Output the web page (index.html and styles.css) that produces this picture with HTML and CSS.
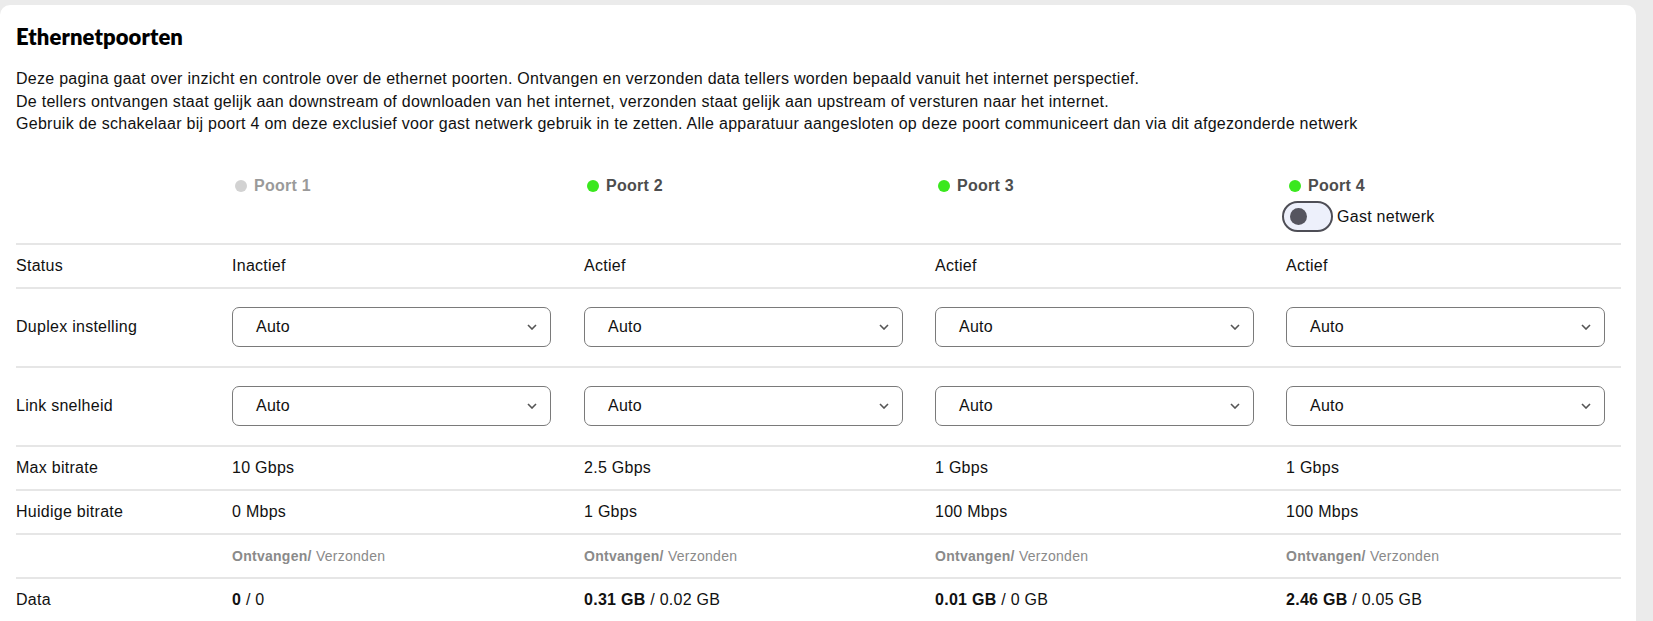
FILE: index.html
```html
<!DOCTYPE html>
<html lang="nl">
<head>
<meta charset="utf-8">
<title>Ethernetpoorten</title>
<link rel="stylesheet" href="styles.css">
</head>
<body>
<div class="card">
  <h1 class="title">Ethernetpoorten</h1>
  <p class="intro">Deze pagina gaat over inzicht en controle over de ethernet poorten. Ontvangen en verzonden data tellers worden bepaald vanuit het internet perspectief.<br>De tellers ontvangen staat gelijk aan downstream of downloaden van het internet, verzonden staat gelijk aan upstream of versturen naar het internet.<br>Gebruik de schakelaar bij poort 4 om deze exclusief voor gast netwerk gebruik in te zetten. Alle apparatuur aangesloten op deze poort communiceert dan via dit afgezonderde netwerk</p>

  <div class="ports">
    <div class="row head">
      <div class="cell"></div>
      <div class="cell"><div class="port off"><span class="dot"></span>Poort 1</div></div>
      <div class="cell"><div class="port"><span class="dot"></span>Poort 2</div></div>
      <div class="cell"><div class="port"><span class="dot"></span>Poort 3</div></div>
      <div class="cell">
        <div class="port"><span class="dot"></span>Poort 4</div>
        <label class="guest"><span class="switch"><span class="knob"></span></span>Gast netwerk</label>
      </div>
    </div>

    <div class="row text">
      <div class="cell label">Status</div>
      <div class="cell">Inactief</div>
      <div class="cell">Actief</div>
      <div class="cell">Actief</div>
      <div class="cell">Actief</div>
    </div>

    <div class="row ctrl">
      <div class="cell label">Duplex instelling</div>
      <div class="cell"><div class="select"><span>Auto</span><svg class="chev" width="10" height="6" viewBox="0 0 10 6"><path d="M1 1l4 4 4-4" fill="none" stroke="#555" stroke-width="1.6"/></svg></div></div>
      <div class="cell"><div class="select"><span>Auto</span><svg class="chev" width="10" height="6" viewBox="0 0 10 6"><path d="M1 1l4 4 4-4" fill="none" stroke="#555" stroke-width="1.6"/></svg></div></div>
      <div class="cell"><div class="select"><span>Auto</span><svg class="chev" width="10" height="6" viewBox="0 0 10 6"><path d="M1 1l4 4 4-4" fill="none" stroke="#555" stroke-width="1.6"/></svg></div></div>
      <div class="cell"><div class="select"><span>Auto</span><svg class="chev" width="10" height="6" viewBox="0 0 10 6"><path d="M1 1l4 4 4-4" fill="none" stroke="#555" stroke-width="1.6"/></svg></div></div>
    </div>

    <div class="row ctrl">
      <div class="cell label">Link snelheid</div>
      <div class="cell"><div class="select"><span>Auto</span><svg class="chev" width="10" height="6" viewBox="0 0 10 6"><path d="M1 1l4 4 4-4" fill="none" stroke="#555" stroke-width="1.6"/></svg></div></div>
      <div class="cell"><div class="select"><span>Auto</span><svg class="chev" width="10" height="6" viewBox="0 0 10 6"><path d="M1 1l4 4 4-4" fill="none" stroke="#555" stroke-width="1.6"/></svg></div></div>
      <div class="cell"><div class="select"><span>Auto</span><svg class="chev" width="10" height="6" viewBox="0 0 10 6"><path d="M1 1l4 4 4-4" fill="none" stroke="#555" stroke-width="1.6"/></svg></div></div>
      <div class="cell"><div class="select"><span>Auto</span><svg class="chev" width="10" height="6" viewBox="0 0 10 6"><path d="M1 1l4 4 4-4" fill="none" stroke="#555" stroke-width="1.6"/></svg></div></div>
    </div>

    <div class="row text">
      <div class="cell label">Max bitrate</div>
      <div class="cell">10 Gbps</div>
      <div class="cell">2.5 Gbps</div>
      <div class="cell">1 Gbps</div>
      <div class="cell">1 Gbps</div>
    </div>

    <div class="row text">
      <div class="cell label">Huidige bitrate</div>
      <div class="cell">0 Mbps</div>
      <div class="cell">1 Gbps</div>
      <div class="cell">100 Mbps</div>
      <div class="cell">100 Mbps</div>
    </div>

    <div class="row text small">
      <div class="cell label"></div>
      <div class="cell"><b>Ontvangen/</b> Verzonden</div>
      <div class="cell"><b>Ontvangen/</b> Verzonden</div>
      <div class="cell"><b>Ontvangen/</b> Verzonden</div>
      <div class="cell"><b>Ontvangen/</b> Verzonden</div>
    </div>

    <div class="row text last">
      <div class="cell label">Data</div>
      <div class="cell"><b>0</b> / 0</div>
      <div class="cell"><b>0.31 GB</b> / 0.02 GB</div>
      <div class="cell"><b>0.01 GB</b> / 0 GB</div>
      <div class="cell"><b>2.46 GB</b> / 0.05 GB</div>
    </div>
  </div>
</div>
</body>
</html>
```
FILE: styles.css
```css
html, body {
  margin: 0;
  padding: 0;
}
body {
  background: #ebebeb;
  font-family: "Liberation Sans", Arial, sans-serif;
  color: #111;
  font-size: 16px;
  letter-spacing: 0.27px;
}
.card {
  background: #fff;
  margin: 5px 17px 0 0;
  border-radius: 10px;
  padding: 19px 15px 40px 16px;
  min-height: 700px;
}
.title {
  font-family: Lato, "Liberation Sans", sans-serif;
  font-weight: 800;
  font-size: 22px;
  line-height: 26px;
  margin: 0 0 18px 0;
  color: #000;
  letter-spacing: 0.1px;
}
.intro {
  margin: 0;
  font-size: 16px;
  line-height: 22.7px;
  color: #111;
}
.ports {
  margin-top: 27px;
}
.row {
  display: grid;
  grid-template-columns: 216px 352px 351px 351px 1fr;
  border-bottom: 2px solid #e6e6e6;
  align-items: center;
}
.row.last {
  border-bottom: none;
}
.row.head {
  align-items: start;
  padding: 12px 0 11px;
}
.row.text {
  padding: 11px 0;
  line-height: 20px;
}
.row.ctrl {
  padding: 18px 0 19px;
}
.row.small .cell {
  font-size: 14px;
  color: #8a8a8a;
}
.row.small b {
  color: #8a8a8a;
}
.port {
  display: flex;
  align-items: center;
  font-weight: 700;
  font-size: 16px;
  line-height: 22px;
  color: #4d4d4d;
  padding-left: 3px;
}
.port.off {
  color: #9a9a9a;
}
.dot {
  width: 12px;
  height: 12px;
  border-radius: 50%;
  background: #3ae81e;
  margin-right: 7px;
}
.port.off .dot {
  background: #d2d2d2;
}
.guest {
  display: flex;
  align-items: center;
  margin-top: 4px;
  margin-left: -4px;
  font-size: 16px;
  line-height: 20px;
  color: #111;
}
.switch {
  box-sizing: border-box;
  width: 51px;
  height: 31px;
  border: 2px solid #4e4e56;
  border-radius: 16px;
  background: #edf0fb;
  display: flex;
  align-items: center;
  padding-left: 6px;
  margin-right: 4px;
}
.knob {
  width: 17px;
  height: 17px;
  border-radius: 50%;
  background: #55555f;
}
.select {
  box-sizing: border-box;
  width: 319px;
  height: 40px;
  border: 1px solid #7a7a7a;
  border-radius: 7px;
  display: flex;
  align-items: center;
  justify-content: space-between;
  padding: 0 13px 0 23px;
  font-size: 16px;
  color: #111;
}
.chev {
  display: block;
}
```
